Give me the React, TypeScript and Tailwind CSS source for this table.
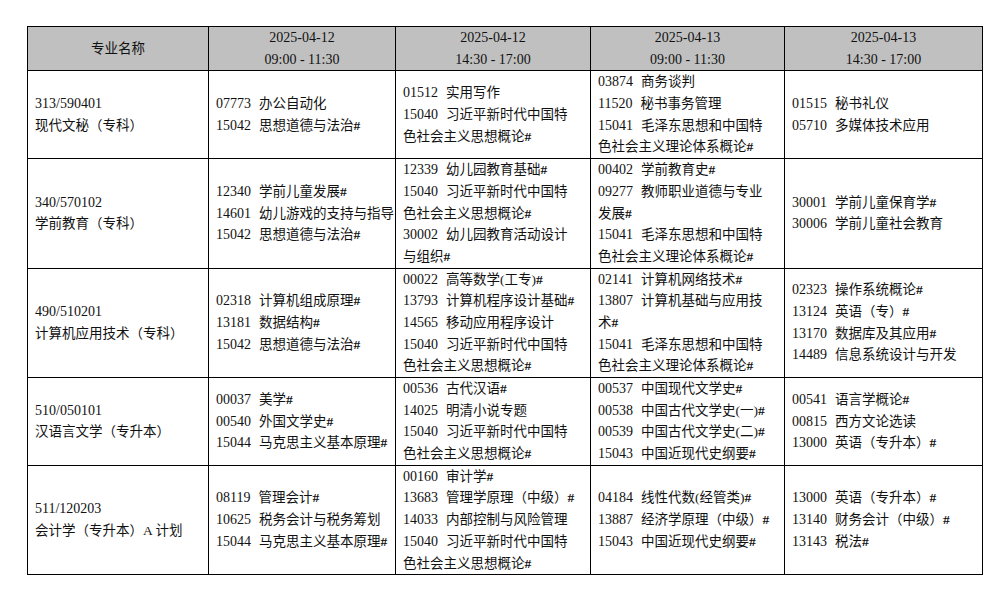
import React from "react";

type Row = { major: [string, string]; cells: string[][] };

const rows: Row[] = [
  {
    major: ["313/590401", "现代文秘（专科）"],
    cells: [
      ["07773 办公自动化", "15042 思想道德与法治#"],
      ["01512 实用写作", "15040 习近平新时代中国特", "色社会主义思想概论#"],
      ["03874 商务谈判", "11520 秘书事务管理", "15041 毛泽东思想和中国特", "色社会主义理论体系概论#"],
      ["01515 秘书礼仪", "05710 多媒体技术应用"],
    ],
  },
  {
    major: ["340/570102", "学前教育（专科）"],
    cells: [
      ["12340 学前儿童发展#", "14601 幼儿游戏的支持与指导", "15042 思想道德与法治#"],
      ["12339 幼儿园教育基础#", "15040 习近平新时代中国特", "色社会主义思想概论#", "30002 幼儿园教育活动设计", "与组织#"],
      ["00402 学前教育史#", "09277 教师职业道德与专业", "发展#", "15041 毛泽东思想和中国特", "色社会主义理论体系概论#"],
      ["30001 学前儿童保育学#", "30006 学前儿童社会教育"],
    ],
  },
  {
    major: ["490/510201", "计算机应用技术（专科）"],
    cells: [
      ["02318 计算机组成原理#", "13181 数据结构#", "15042 思想道德与法治#"],
      ["00022 高等数学(工专)#", "13793 计算机程序设计基础#", "14565 移动应用程序设计", "15040 习近平新时代中国特", "色社会主义思想概论#"],
      ["02141 计算机网络技术#", "13807 计算机基础与应用技", "术#", "15041 毛泽东思想和中国特", "色社会主义理论体系概论#"],
      ["02323 操作系统概论#", "13124 英语（专）#", "13170 数据库及其应用#", "14489 信息系统设计与开发"],
    ],
  },
  {
    major: ["510/050101", "汉语言文学（专升本）"],
    cells: [
      ["00037 美学#", "00540 外国文学史#", "15044 马克思主义基本原理#"],
      ["00536 古代汉语#", "14025 明清小说专题", "15040 习近平新时代中国特", "色社会主义思想概论#"],
      ["00537 中国现代文学史#", "00538 中国古代文学史(一)#", "00539 中国古代文学史(二)#", "15043 中国近现代史纲要#"],
      ["00541 语言学概论#", "00815 西方文论选读", "13000 英语（专升本）#"],
    ],
  },
  {
    major: ["511/120203", "会计学（专升本）A 计划"],
    cells: [
      ["08119 管理会计#", "10625 税务会计与税务筹划", "15044 马克思主义基本原理#"],
      ["00160 审计学#", "13683 管理学原理（中级）#", "14033 内部控制与风险管理", "15040 习近平新时代中国特", "色社会主义思想概论#"],
      ["04184 线性代数(经管类)#", "13887 经济学原理（中级）#", "15043 中国近现代史纲要#"],
      ["13000 英语（专升本）#", "13140 财务会计（中级）#", "13143 税法#"],
    ],
  },
];

const headers: [string, string][] = [
  ["2025-04-12", "09:00 - 11:30"],
  ["2025-04-12", "14:30 - 17:00"],
  ["2025-04-13", "09:00 - 11:30"],
  ["2025-04-13", "14:30 - 17:00"],
];

function Name({ text }: { text: string }) {
  const parts = text.split("#");
  return (
    <>
      {parts.map((p, i) => (
        <React.Fragment key={i}>
          {p}
          {i < parts.length - 1 && <b className="font-bold">#</b>}
        </React.Fragment>
      ))}
    </>
  );
}

function Line({ text, center }: { text: string; center?: boolean }) {
  const m = text.match(/^(\d{5}) (.*)$/);
  const cls = "whitespace-nowrap h-[21.7px] leading-[21.7px]" + (center ? " text-center" : "");
  if (m) {
    return (
      <div className={cls}>
        <span className="text-[14px]">{m[1]}</span>
        <span className="ml-[8px]">
          <Name text={m[2]} />
        </span>
      </div>
    );
  }
  return (
    <div className={cls}>
      <Name text={text} />
    </div>
  );
}

export default function App() {
  return (
    <div
      className="w-[1004px] h-[597px] bg-white pt-[26px] pl-[27px] text-[#111111] text-[13.5px] leading-[21.7px]"
      style={{ fontFamily: '"Liberation Serif", "Noto Sans CJK SC", serif' }}
    >
      <table className="table-fixed border-collapse w-[955px]">
        <colgroup>
          <col className="w-[181px]" />
          <col className="w-[187px]" />
          <col className="w-[195px]" />
          <col className="w-[194px]" />
          <col className="w-[198px]" />
        </colgroup>
        <thead>
          <tr className="bg-[#c0c0c0]">
            <th className="border border-black font-normal text-center align-middle p-0">
              <Line text="专业名称" center />
            </th>
            {headers.map((h, i) => (
              <th key={i} className="border border-black font-normal text-center align-middle p-0 text-[14px]">
                <Line text={h[0]} center />
                <Line text={h[1]} center />
              </th>
            ))}
          </tr>
        </thead>
        <tbody>
          {rows.map((r, i) => (
            <tr key={i}>
              <td className="border border-black align-middle px-[7px] py-0">
                <div className="whitespace-nowrap h-[21.7px] leading-[21.7px] text-[14px]">{r.major[0]}</div>
                <Line text={r.major[1]} />
              </td>
              {r.cells.map((c, j) => (
                <td key={j} className="border border-black align-middle px-[7px] py-0">
                  {c.map((l, k) => (
                    <Line key={k} text={l} />
                  ))}
                </td>
              ))}
            </tr>
          ))}
        </tbody>
      </table>
    </div>
  );
}
